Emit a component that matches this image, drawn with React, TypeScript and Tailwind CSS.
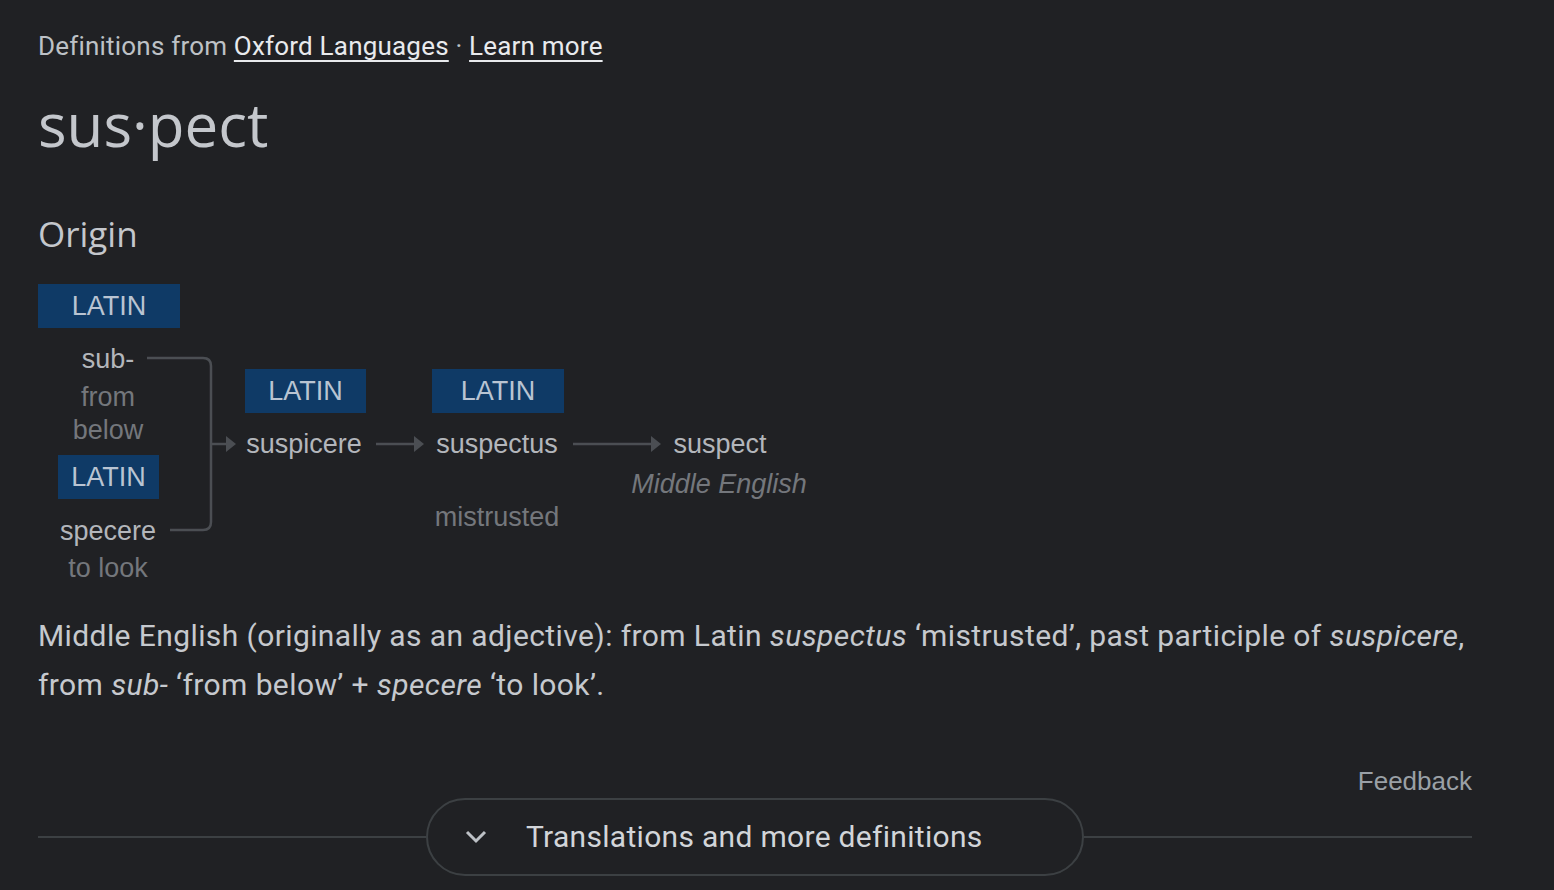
import React from "react";

const BODY = { fontFamily: "Roboto, 'Liberation Sans', sans-serif" };
const HEAD = { fontFamily: "'Open Sans', 'Noto Sans', sans-serif" };
const DIAG = { fontFamily: "'Liberation Sans', Arial, sans-serif" };

function LatinTag({ x, y, w }: { x: number; y: number; w: number }) {
  return (
    <div
      className="absolute flex h-[44px] items-center justify-center bg-[#0f3a66] text-[27px] text-[#b9c4d2]"
      style={{ left: x, top: y, width: w }}
    >
      LATIN
    </div>
  );
}

function Word({
  x,
  y,
  w,
  children,
  dim,
  italic,
}: {
  x: number;
  y: number;
  w: number;
  children: React.ReactNode;
  dim?: boolean;
  italic?: boolean;
}) {
  return (
    <div
      className={`absolute text-center text-[27px] leading-[34px] ${
        dim ? "text-[#74777c]" : "text-[#b3b6bb]"
      } ${italic ? "italic" : ""}`}
      style={{ left: x, top: y - 17, width: w }}
    >
      {children}
    </div>
  );
}

function Diagram() {
  // node coordinates are relative to the diagram's top-left (page x 0, y 284)
  return (
    <div className="relative h-[301px] w-[840px]" style={DIAG}>
      <svg className="absolute left-0 top-0" width="840" height="301" fill="none">
        <g stroke="#4b4e53" strokeWidth="2.5">
          <path d="M147 74 H203 Q211 74 211 82 V238 Q211 246 203 246 H170" />
          <path d="M211 160 H230" />
          <path d="M376 160 H418" />
          <path d="M573 160 H655" />
        </g>
        <g fill="#4b4e53">
          <path d="M236 160 L226 152 L226 168 Z" />
          <path d="M424 160 L414 152 L414 168 Z" />
          <path d="M661 160 L651 152 L651 168 Z" />
        </g>
      </svg>

      <LatinTag x={38} y={0} w={142} />
      <Word x={58} y={75} w={100}>sub-</Word>
      <Word x={58} y={113} w={100} dim>from</Word>
      <Word x={58} y={146} w={100} dim>below</Word>
      <LatinTag x={58} y={171} w={101} />
      <Word x={48} y={247} w={120}>specere</Word>
      <Word x={48} y={284} w={120} dim>to look</Word>

      <LatinTag x={245} y={85} w={121} />
      <Word x={234} y={160} w={140}>suspicere</Word>

      <LatinTag x={432} y={85} w={132} />
      <Word x={422} y={160} w={150}>suspectus</Word>
      <Word x={422} y={233} w={150} dim>mistrusted</Word>

      <Word x={640} y={160} w={160}>suspect</Word>
      <Word x={609} y={200} w={220} dim italic>
        Middle English
      </Word>
    </div>
  );
}

export default function App() {
  return (
    <div className="h-[890px] w-full overflow-hidden bg-[#202124]" style={BODY}>
      <div className="w-[1472px] pl-[38px]">
        <div className="pt-[30px] text-[26px] leading-[32px] tracking-[0.2px] text-[#bdc1c6]">
          Definitions from{" "}
          <a className="text-[#e8eaed] underline underline-offset-[5px]">Oxford Languages</a>
          {" · "}
          <a className="text-[#e8eaed] underline underline-offset-[5px]">Learn more</a>
        </div>

        <h1 className="mt-[26px] text-[60px] leading-[72px] text-[#c4c7cc]" style={HEAD}>
          sus·pect
        </h1>

        <h2 className="mt-[52px] text-[35px] leading-[44px] text-[#c4c7cc]" style={HEAD}>
          Origin
        </h2>

        <div className="-ml-[38px] mt-[28px]">
          <Diagram />
        </div>

        <p className="mt-[26px] text-[30px] leading-[49px] tracking-[0.4px] text-[#c6c9ce]">
          Middle English (originally as an adjective): from Latin <i>suspectus</i> ‘mistrusted’, past
          participle of <i>suspicere</i>, from <i>sub-</i> ‘from below’ + <i>specere</i> ‘to look’.
        </p>

        <div className="mt-[56px] flex justify-end">
          <span className="text-[26px] leading-[32px] text-[#9aa0a6]" style={DIAG}>
            Feedback
          </span>
        </div>

        <div className="mt-[1px] flex items-center">
          <div className="h-[2px] flex-1 bg-[#3c4043]" />
          <button className="flex h-[78px] w-[658px] items-center rounded-full border-2 border-[#3c4043] pl-[37px] text-left">
            <svg width="22" height="14" viewBox="0 0 22 14" fill="none">
              <path d="M2 2 L11 11 L20 2" stroke="#bdc1c6" strokeWidth="3" />
            </svg>
            <span className="ml-[39px] text-[30px] leading-[40px] tracking-[0.3px] text-[#d2d5d9]">
              Translations and more definitions
            </span>
          </button>
          <div className="h-[2px] flex-1 bg-[#3c4043]" />
        </div>
      </div>
    </div>
  );
}
